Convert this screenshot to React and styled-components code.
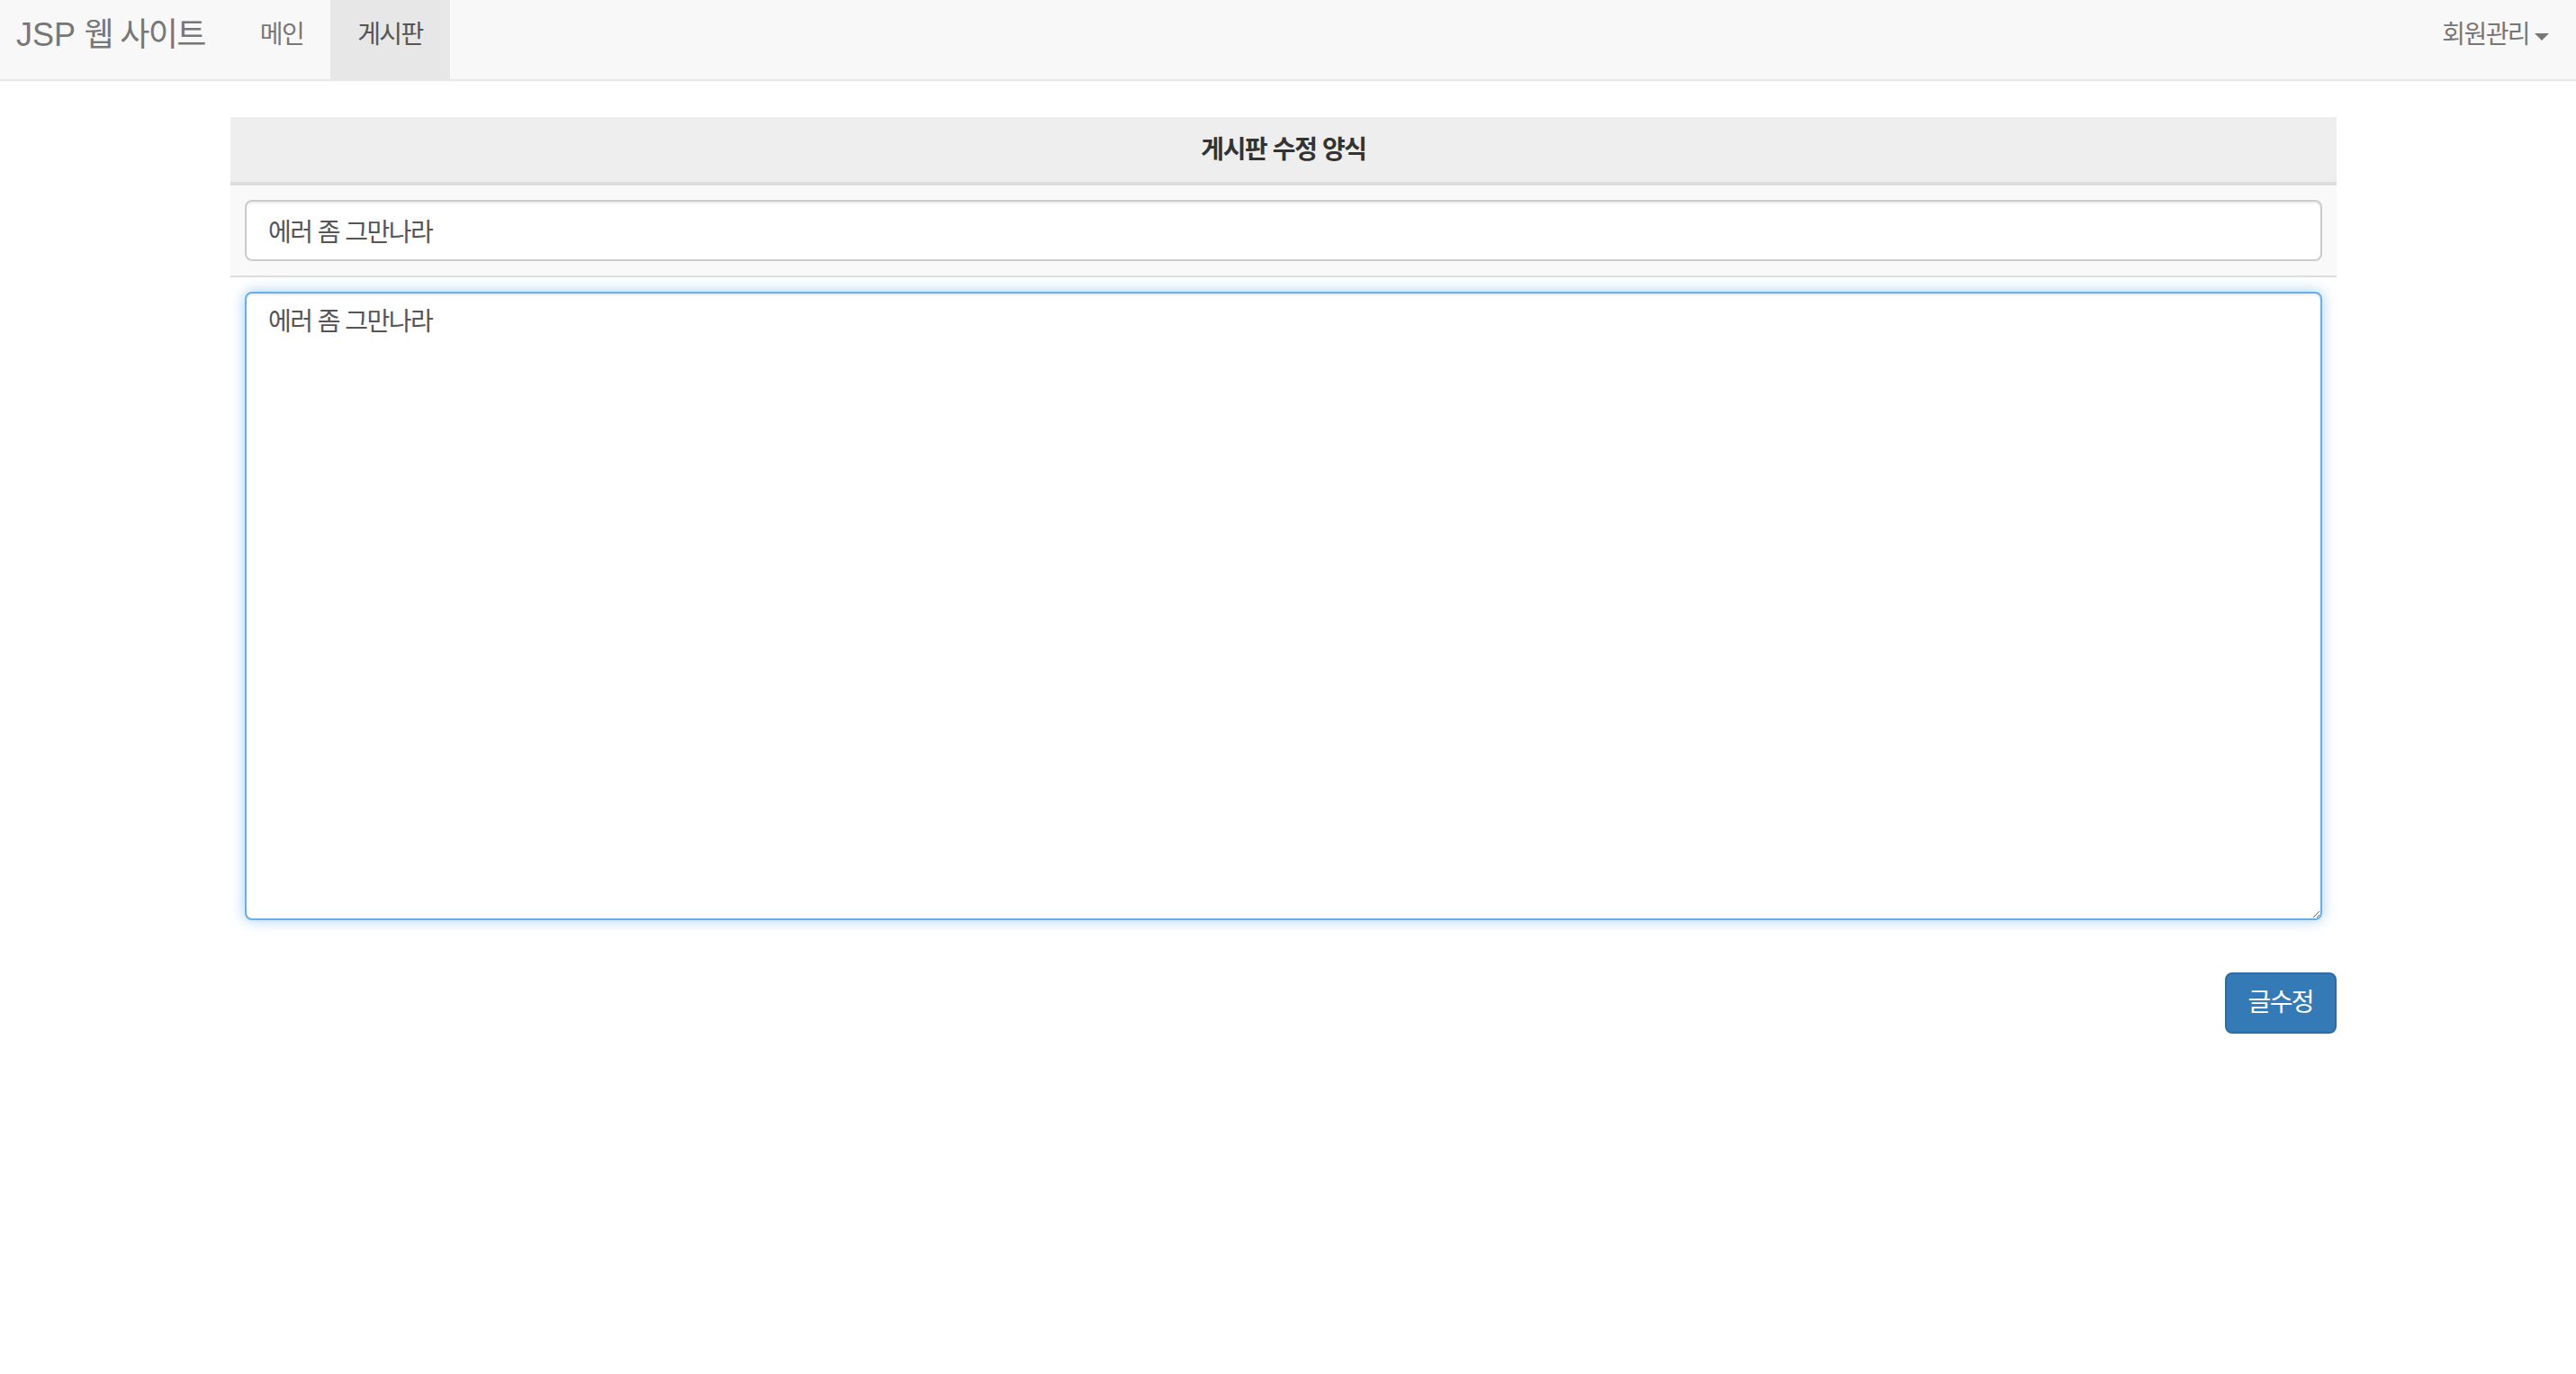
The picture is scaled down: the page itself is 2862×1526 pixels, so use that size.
import { useEffect, useRef } from 'react'
import styled, { createGlobalStyle } from 'styled-components'

const GlobalStyle = createGlobalStyle`
  * { box-sizing: border-box; }
  body {
    margin: 0;
    background: #fff;
    color: #333;
    font-family: "Liberation Sans", "Noto Sans CJK KR", sans-serif;
    font-size: 28px;
    line-height: 40px;
  }
`

const App = () => {
  const areaRef = useRef(null)

  useEffect(() => {
    const el = areaRef.current
    if (el) {
      el.focus()
      el.setSelectionRange(el.value.length, el.value.length)
    }
  }, [])

  return (
    <>
      <GlobalStyle />
      <Navbar>
        <Brand>JSP <Ko>웹 사이트</Ko></Brand>
        <NavLink>메인</NavLink>
        <NavLink $active>게시판</NavLink>
        <Spacer />
        <NavLink>
          회원관리<Caret />
        </NavLink>
      </Navbar>

      <Container>
        <Panel>
          <PanelHead>게시판 수정 양식</PanelHead>
          <Row $striped>
            <TitleInput type="text" defaultValue="에러 좀 그만나라" />
          </Row>
          <Row>
            <ContentArea ref={areaRef} defaultValue="에러 좀 그만나라" />
          </Row>
        </Panel>
        <Actions>
          <SubmitButton type="button">글수정</SubmitButton>
        </Actions>
      </Container>
    </>
  )
}

const Navbar = styled.nav`
  display: flex;
  align-items: stretch;
  height: 90px;
  background: #f8f8f8;
  border-bottom: 2px solid #e7e7e7;
  padding-left: 18px;
`

const Brand = styled.a`
  padding: 19px 31px 0 0;
  font-size: 36px;
  line-height: 40px;
  color: #777;
  cursor: pointer;
`

const Ko = styled.span`
  letter-spacing: -1.6px;
`

const NavLink = styled.a`
  display: flex;
  align-items: flex-start;
  padding: 19px 30px 0 30px;
  line-height: 40px;
  letter-spacing: -1.6px;
  color: ${(p) => (p.$active ? '#555' : '#777')};
  background: ${(p) => (p.$active ? '#e7e7e7' : 'transparent')};
  cursor: pointer;
`

const Caret = styled.span`
  display: inline-block;
  width: 0;
  height: 0;
  margin: 18px 0 0 6px;
  border-top: 8px solid #777;
  border-left: 8px solid transparent;
  border-right: 8px solid transparent;
`

const Spacer = styled.div`
  flex: 1;
`

const Container = styled.main`
  width: 2340px;
  margin: 40px 0 0 256px;
`

const Panel = styled.div`
  margin-bottom: 42px;
`

const PanelHead = styled.div`
  padding: 17px 16px 15px;
  background: #eee;
  border-bottom: 4px solid #ddd;
  text-align: center;
  font-weight: bold;
  letter-spacing: -1.4px;
  color: #333;
`

const Row = styled.div`
  padding: 16px;
  background: ${(p) => (p.$striped ? '#f9f9f9' : '#fff')};
  & + & {
    border-top: 2px solid #ddd;
  }
`

const fieldBase = `
  display: block;
  width: 100%;
  padding: 12px 24px;
  font-family: "Liberation Sans", "Noto Sans CJK KR", sans-serif;
  font-size: 28px;
  line-height: 40px;
  letter-spacing: -1.5px;
  color: #555;
  background: #fff;
  border-radius: 8px;
  outline: none;
`

const TitleInput = styled.input`
  ${fieldBase}
  height: 68px;
  border: 2px solid #ccc;
  box-shadow: inset 0 2px 2px rgba(0, 0, 0, 0.075);
`

const ContentArea = styled.textarea`
  ${fieldBase}
  height: 698px;
  border: 2px solid #66afe9;
  box-shadow: inset 0 2px 2px rgba(0, 0, 0, 0.075), 0 0 16px rgba(102, 175, 233, 0.6);
  resize: vertical;
`

const Actions = styled.div`
  display: flex;
  justify-content: flex-end;
`

const SubmitButton = styled.button`
  height: 68px;
  padding: 0 24px;
  font-family: "Liberation Sans", "Noto Sans CJK KR", sans-serif;
  font-size: 28px;
  line-height: 40px;
  letter-spacing: -1.6px;
  color: #fff;
  background: #337ab7;
  border: 2px solid #2e6da4;
  border-radius: 8px;
  cursor: pointer;
`

export default App
